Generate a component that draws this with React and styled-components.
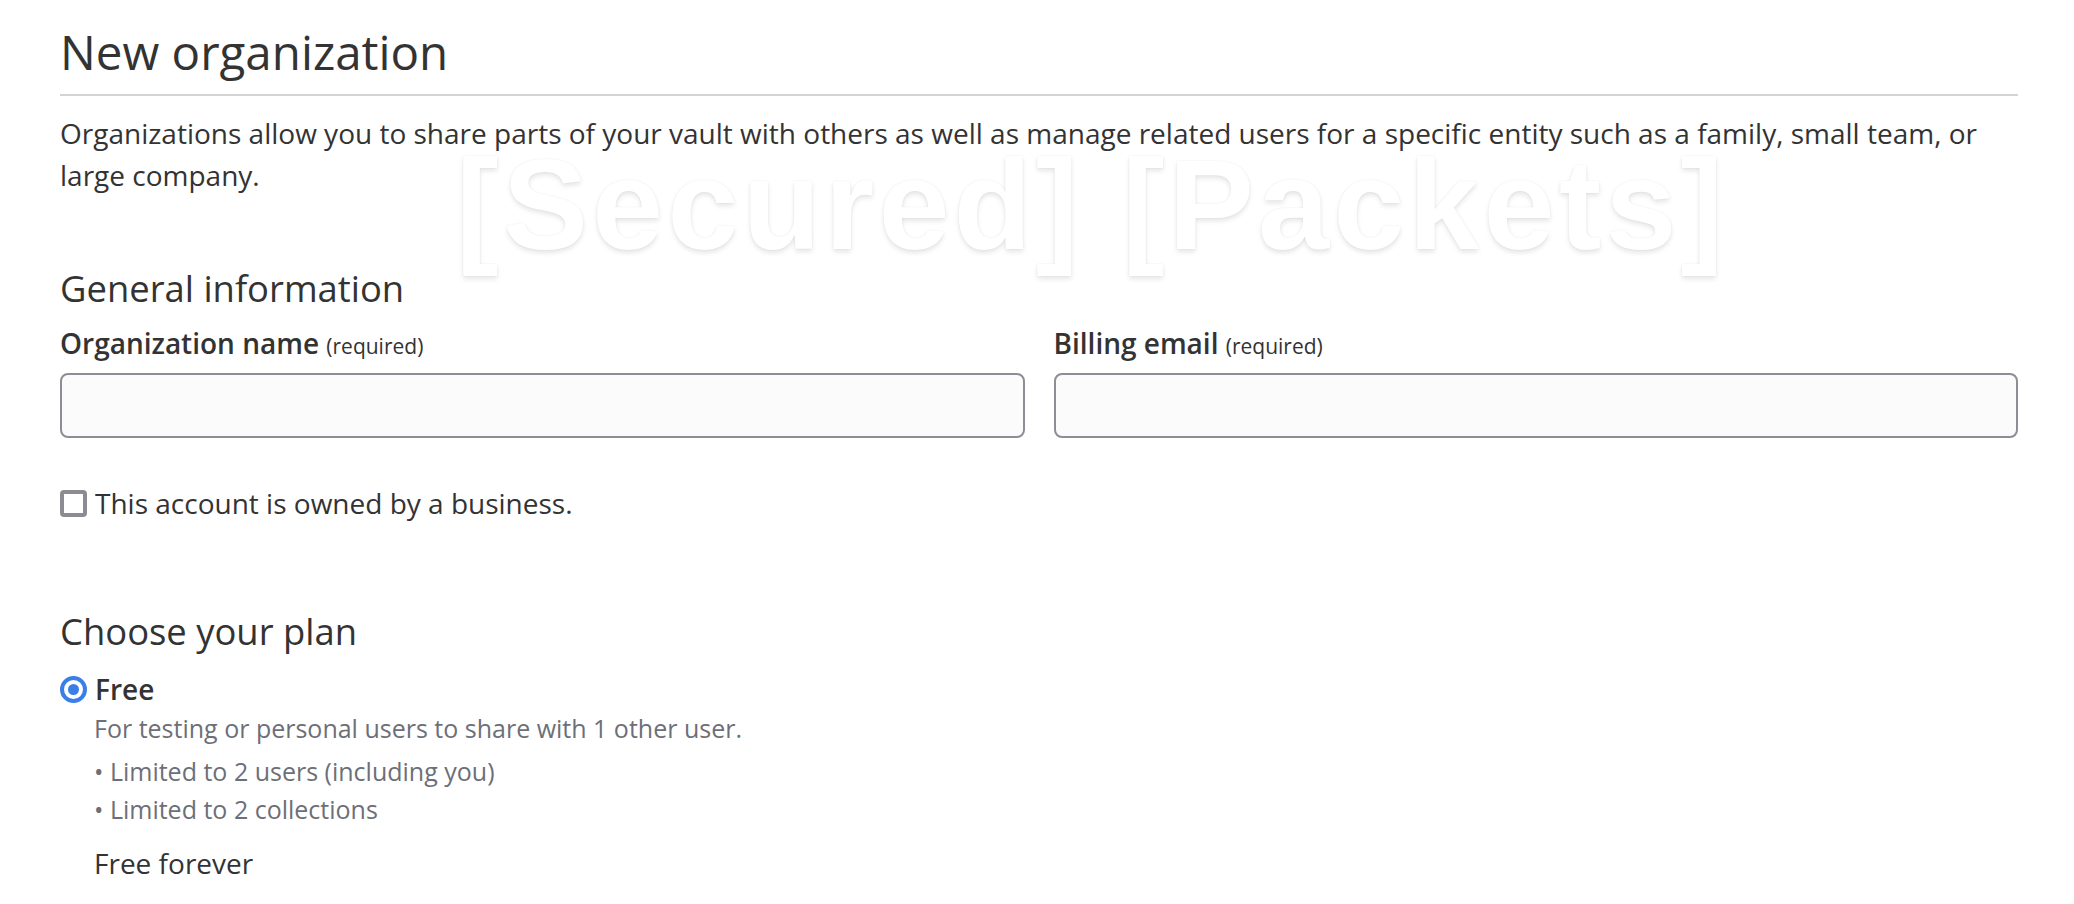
import React, { useState } from 'react';
import styled, { createGlobalStyle } from 'styled-components';

const GlobalStyle = createGlobalStyle`
  html, body {
    margin: 0;
    padding: 0;
    background: #fff;
  }
  body {
    font-family: "Open Sans", "Liberation Sans", sans-serif;
    color: #333;
  }
  * {
    box-sizing: border-box;
  }
`;

const Page = styled.div`
  position: relative;
  padding: 18px 56px 0 60px;
  min-height: 904px;
  overflow: hidden;
`;

const Watermark = styled.div`
  position: absolute;
  left: 456px;
  top: 141px;
  font-family: "Liberation Sans", Arial, sans-serif;
  font-weight: 700;
  font-size: 128px;
  line-height: 1;
  letter-spacing: 4px;
  color: #fff;
  white-space: nowrap;
  pointer-events: none;
  text-shadow: 0 3px 5px rgba(0, 0, 0, 0.1), 0 0 2px rgba(0, 0, 0, 0.07);
`;

const PageHeader = styled.div`
  border-bottom: 2px solid #d3d3d6;
  padding-bottom: 9px;
`;

const Title = styled.h1`
  margin: 0;
  font-size: 47.5px;
  line-height: 67px;
  font-weight: 400;
  color: #333;
`;

const Lead = styled.p`
  margin: 16px 0 0;
  font-size: 28px;
  line-height: 42px;
  color: #333;
`;

const SectionTitle = styled.h2`
  margin: ${(p) => p.$top}px 0 0;
  font-size: 36.4px;
  line-height: 48px;
  font-weight: 400;
  color: #333;
`;

const FieldRow = styled.div`
  display: grid;
  grid-template-columns: 1fr 1fr;
  gap: 29px;
  margin-top: 10px;
`;

const Field = styled.div`
  display: flex;
  flex-direction: column;
`;

const Label = styled.label`
  font-size: 28px;
  line-height: 42px;
  font-weight: 600;
  color: #333;
  margin-bottom: 6px;
`;

const Small = styled.small`
  font-size: 21px;
  font-weight: 400;
`;

const Input = styled.input`
  height: 65px;
  border: 2px solid #8d8d96;
  border-radius: 8px;
  background: #fbfbfb;
  padding: 0 16px;
  font-family: inherit;
  font-size: 28px;
  color: #333;
  outline: none;
`;

const CheckRow = styled.label`
  display: flex;
  align-items: center;
  gap: 8px;
  margin-top: 44px;
  font-size: 28px;
  line-height: 42px;
  color: #333;
`;

const Box = styled.span`
  width: 27px;
  height: 27px;
  border: 4px solid #8b8b94;
  border-radius: 4px;
  background: #fff;
  flex-shrink: 0;
`;

const PlanHead = styled.div`
  display: flex;
  align-items: center;
  gap: 8px;
  margin-top: 13px;
  font-size: 28px;
  line-height: 42px;
  font-weight: 600;
  color: #333;
`;

const Radio = styled.span`
  width: 27px;
  height: 27px;
  border-radius: 50%;
  border: 4px solid #3a7ee8;
  background: #fff;
  display: flex;
  align-items: center;
  justify-content: center;
  flex-shrink: 0;

  &::after {
    content: '';
    width: 11px;
    height: 11px;
    border-radius: 50%;
    background: #3a7ee8;
  }
`;

const PlanBody = styled.div`
  padding-left: 34px;
`;

const Muted = styled.div`
  font-size: 25px;
  line-height: 38px;
  color: #6d6f78;
  margin-top: ${(p) => p.$top || 0}px;
`;

const Price = styled.div`
  font-size: 28px;
  line-height: 38px;
  color: #333;
  margin-top: 16px;
`;

const App = () => {
  const [name, setName] = useState('');
  const [email, setEmail] = useState('');

  return (
    <>
      <GlobalStyle />
      <Page>
        <PageHeader>
          <Title>New organization</Title>
        </PageHeader>
        <Lead>
          Organizations allow you to share parts of your vault with others as well as manage related users for a
          specific entity such as a family, small team, or large company.
        </Lead>

        <SectionTitle $top={68}>General information</SectionTitle>
        <FieldRow>
          <Field>
            <Label>
              Organization name <Small>(required)</Small>
            </Label>
            <Input value={name} onChange={(e) => setName(e.target.value)} />
          </Field>
          <Field>
            <Label>
              Billing email <Small>(required)</Small>
            </Label>
            <Input value={email} onChange={(e) => setEmail(e.target.value)} />
          </Field>
        </FieldRow>
        <CheckRow>
          <Box />
          This account is owned by a business.
        </CheckRow>

        <SectionTitle $top={83}>Choose your plan</SectionTitle>
        <PlanHead>
          <Radio />
          Free
        </PlanHead>
        <PlanBody>
          <Muted $top={-1}>For testing or personal users to share with 1 other user.</Muted>
          <Muted $top={5}>• Limited to 2 users (including you)</Muted>
          <Muted>• Limited to 2 collections</Muted>
          <Price>Free forever</Price>
        </PlanBody>

        <Watermark>[Secured] [Packets]</Watermark>
      </Page>
    </>
  );
};

export default App;
